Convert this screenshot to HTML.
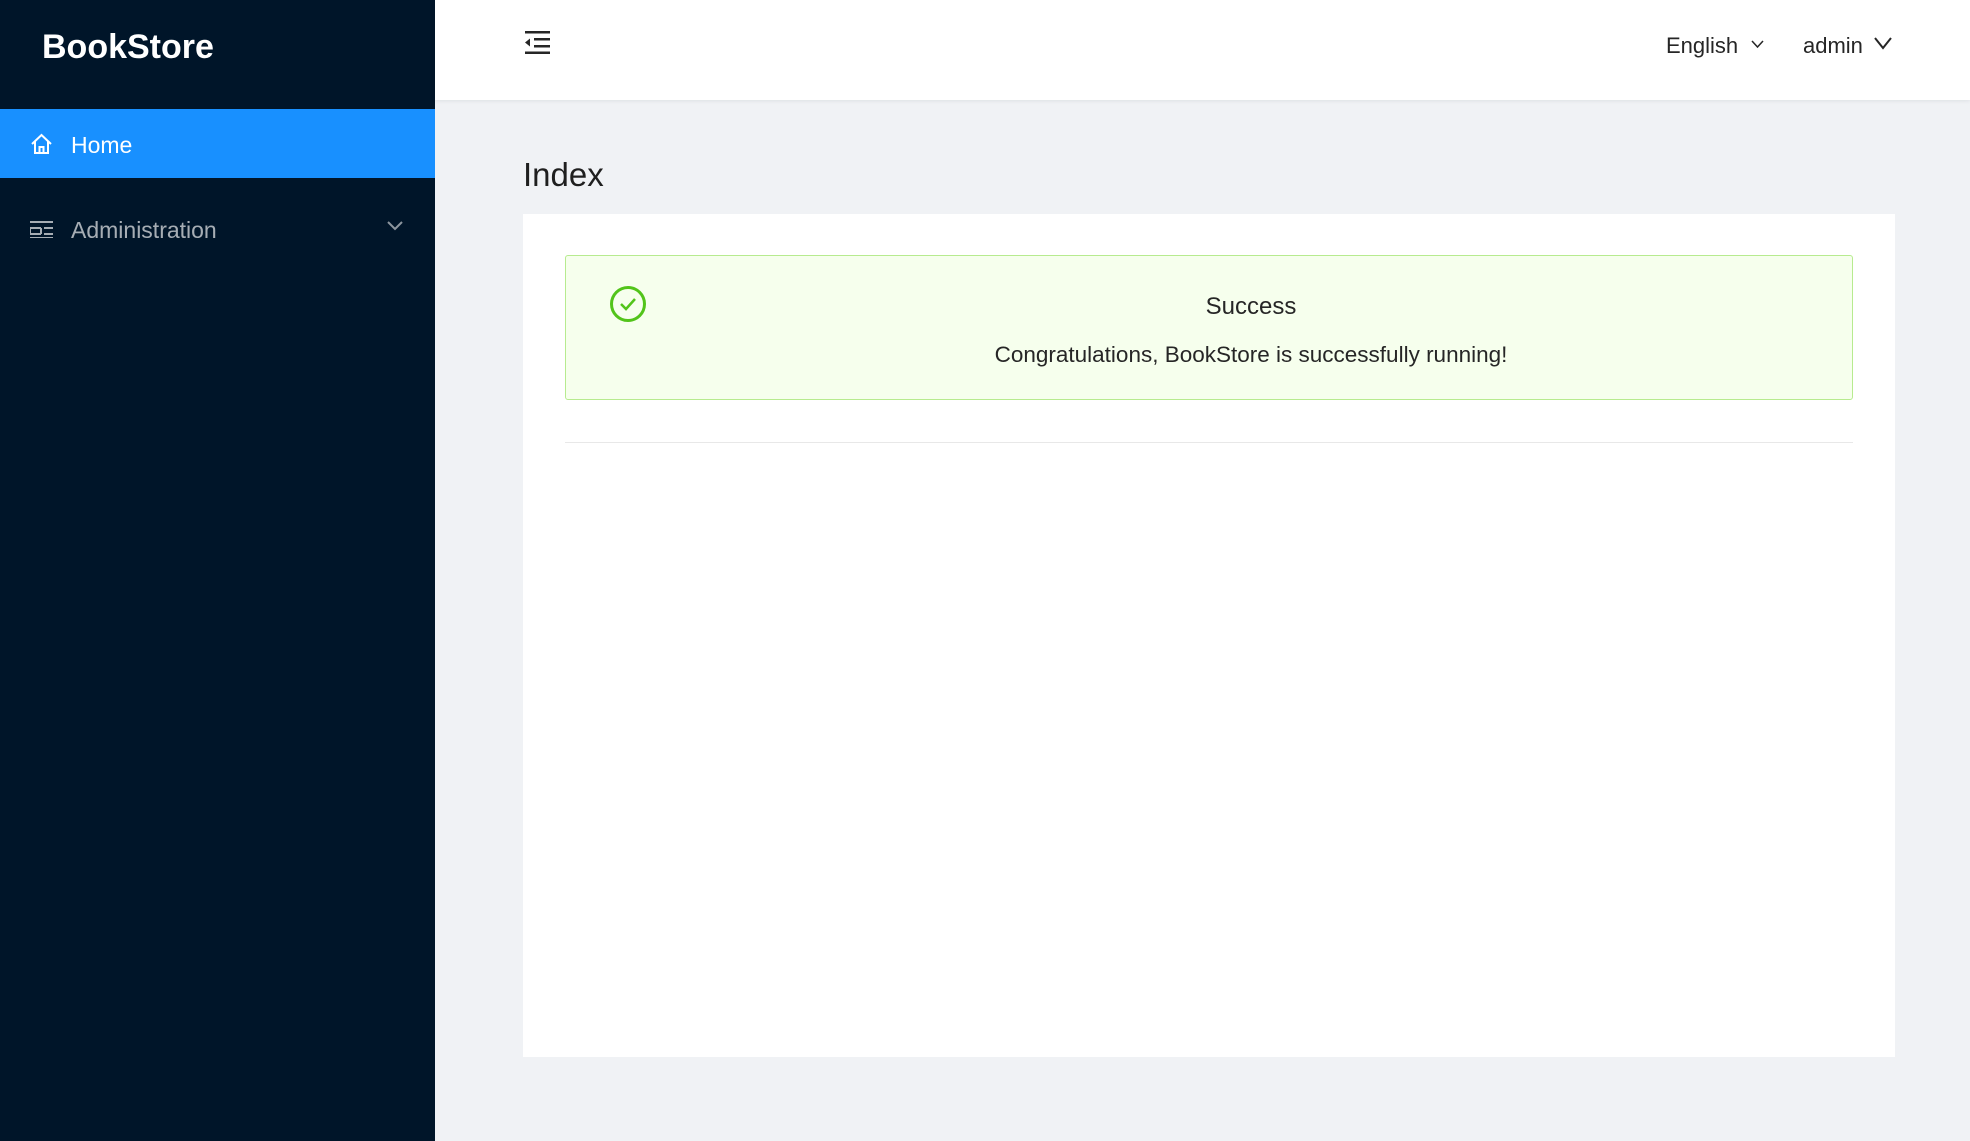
<!DOCTYPE html>
<html><head><meta charset="utf-8"><style>
*{margin:0;padding:0;box-sizing:border-box}
body{width:1970px;height:1141px;background:#f0f2f5;font-family:"Liberation Sans",sans-serif;position:relative;overflow:hidden}
.side{position:absolute;left:0;top:0;width:435px;height:1141px;background:#001529}
.logo{position:absolute;left:42px;top:28px;color:#fff;font-size:34px;font-weight:bold}
.home{position:absolute;left:0;top:109px;width:435px;height:69px;background:#1890ff;color:#fff;font-size:23px}
.home span{position:absolute;left:71px;top:23px}
.adm{position:absolute;left:71px;top:217px;color:rgba(255,255,255,.65);font-size:23px}
.hdr{position:absolute;left:435px;top:0;right:0;height:100px;background:#fff;box-shadow:0 1px 4px rgba(0,21,41,.08)}
.t{position:absolute;font-size:22px;color:#262626}
.card{position:absolute;left:523px;top:214px;width:1372px;height:843px;background:#fff}
.alert{position:absolute;left:42px;top:41px;width:1288px;height:145px;background:#f6ffed;border:1px solid #b7eb8f;border-radius:3px}
.div{position:absolute;left:42px;top:228px;width:1288px;height:1px;background:#e8e8e8}
</style></head><body>
<div class="side">
<div class="logo">BookStore</div>
<div class="home">
<svg style="position:absolute;left:30px;top:24px" width="23" height="22" viewBox="0 0 23 22" fill="none" stroke="#fff" stroke-width="2"><path d="M2 11 L11.5 2 L21 11 M5 8 V20 H18 V8 M9.5 20 V14 H13.5 V20"/></svg>
<span>Home</span></div>
<svg style="position:absolute;left:30px;top:220px" width="23" height="18" viewBox="0 0 23 18" fill="none" stroke="rgba(255,255,255,.65)" stroke-width="2"><path d="M0 2H23M0 8H11M0 14H11M0 18H23M14 8H23M14 14H23M0 8V14M11 8V14" /></svg>
<div class="adm">Administration</div>
<svg style="position:absolute;left:387px;top:221px" width="16" height="10" viewBox="0 0 16 10" fill="none" stroke="rgba(255,255,255,.55)" stroke-width="2"><path d="M1 1L8 8L15 1"/></svg>
</div>
<div class="hdr">
<svg style="position:absolute;left:90px;top:31px" width="25" height="23" viewBox="0 0 25 23" fill="#262626"><rect x="0" y="0" width="25" height="2.5"/><rect x="9" y="7" width="16" height="2.5"/><rect x="9" y="14" width="16" height="2.5"/><rect x="0" y="20.5" width="25" height="2.5"/><path d="M0 11.5L5 7.5V15.5Z"/></svg>
<div class="t" style="left:1231px;top:33px">English</div>
<svg style="position:absolute;left:1316px;top:40px" width="13" height="9" viewBox="0 0 13 9" fill="none" stroke="#262626" stroke-width="1.5"><path d="M1 1L6.5 7L12 1"/></svg>
<div class="t" style="left:1368px;top:33px">admin</div>
<svg style="position:absolute;left:1439px;top:37px" width="18" height="13" viewBox="0 0 18 13" fill="none" stroke="#262626" stroke-width="2"><path d="M1 1L9 11L17 1"/></svg>
</div>
<div class="t" style="left:523px;top:156px;font-size:33px;color:#1f1f1f">Index</div>
<div class="card">
<div class="alert">
<svg style="position:absolute;left:43px;top:29px" width="38" height="38" viewBox="0 0 38 38" fill="none" stroke="#52c41a" stroke-width="3"><circle cx="19" cy="19" r="16.5"/><path d="M12 19L17 24L26 14" stroke-width="2.5"/></svg>
<div class="t" style="left:82px;width:1206px;text-align:center;top:37px;font-size:24px">Success</div>
<div class="t" style="left:82px;width:1206px;text-align:center;top:86px;font-size:22.5px">Congratulations, BookStore is successfully running!</div>
</div>
<div class="div"></div>
</div>
</body></html>
